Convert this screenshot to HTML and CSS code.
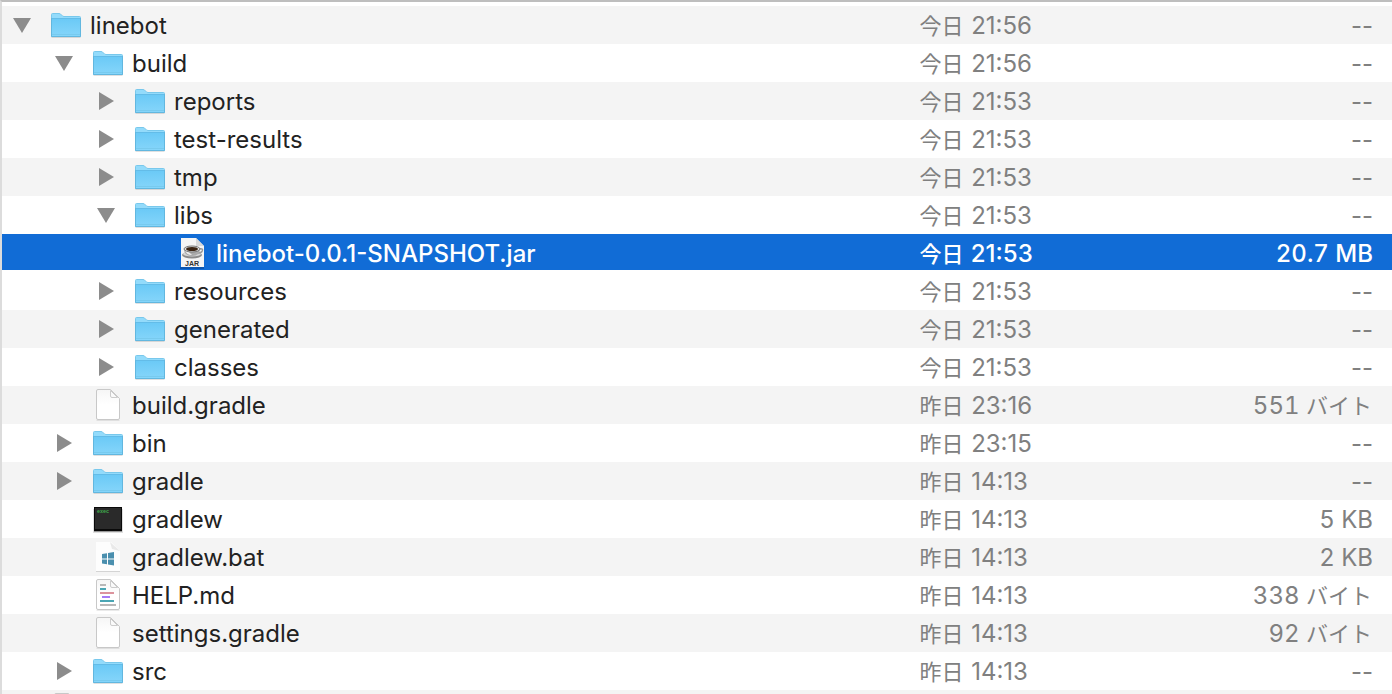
FILE: index.html
```html
<!DOCTYPE html>
<html lang="ja">
<head>
    <meta charset="UTF-8">
    <meta name="viewport" content="width=device-width, initial-scale=1.0">
    <title>linebot</title>
    <link rel="stylesheet" href="styles.css">
</head>
<body>
    <!-- Icon definitions -->
    <svg class="sprite" width="0" height="0" aria-hidden="true">
        <defs>
            <linearGradient id="folder-fill" x1="0" y1="0" x2="0" y2="1">
                <stop offset="0" stop-color="#6ac9f6"/>
                <stop offset="1" stop-color="#85d5fa"/>
            </linearGradient>
            <linearGradient id="page-fill" x1="0" y1="0" x2="0" y2="1">
                <stop offset="0" stop-color="#f6f6f6"/>
                <stop offset="0.5" stop-color="#ffffff"/>
            </linearGradient>
            <symbol id="down" viewBox="0 0 18 18">
                <path d="M0 2H18L9 17Z" fill="#8c8c8c"/>
            </symbol>
            <symbol id="right" viewBox="0 0 18 18">
                <path d="M2 0V18L17 9Z" fill="#8c8c8c"/>
            </symbol>
            <symbol id="folder" viewBox="0 0 32 32">
                <path d="M1.500 28.500H30.500" stroke="#000" stroke-opacity="0.12"/>
                <path d="M1.500 5.500Q1.500 4.500 2.500 4.500H9Q10.500 4.500 11.500 6Q12.500 7.500 14 7.500H29.500Q30.500 7.500 30.500 8.500V27.500H1.500Z" fill="#93dbfb" stroke="#78c8ec"/>
                <path d="M2 9H30V27H2Z" fill="url(#folder-fill)"/>
                <path d="M2 9.500H30" stroke="#63bce8"/>
                <path d="M1.500 9V27.500H30.500V9" fill="none" stroke="#62b7df"/>
                <path d="M2 25.500H30" stroke="#78caee"/>
            </symbol>
            <symbol id="page" viewBox="0 0 32 32">
                <path d="M4.500 31.200H27.500" stroke="#000" stroke-opacity="0.12"/>
                <path d="M6 0.500H18.500L27.500 9.500V29Q27.500 30.500 26 30.500H6Q4.500 30.500 4.500 29V2Q4.500 0.500 6 0.500Z" fill="url(#page-fill)" stroke="#c8c8c8"/>
                <path d="M18.500 1.500V7Q18.500 8.500 20 8.500H25.500Z" fill="#fafafa" stroke="#cccccc"/>
            </symbol>
            <symbol id="exec" viewBox="0 0 32 32">
                <rect x="1" y="6" width="30" height="24" fill="#000" opacity="0.12"/>
                <rect x="2" y="4" width="28" height="24" fill="#0a0a0a"/>
                <rect x="3" y="5" width="26" height="21" fill="#2a2a2a"/>
                <path d="M2 28.500H30" stroke="#999"/>
                <text x="5" y="10" class="exec-text">exec</text>
            </symbol>
            <symbol id="bat" viewBox="0 0 32 32">
                <path d="M4 1H19L28 10V30H4Z" fill="#fdfdfd"/>
                <path d="M4 30.500H28" stroke="#d4d4d4"/>
                <path d="M18 1L20 8L28 10Z" fill="#e9e9e9"/>
                <path d="M10 13L15 12.200V17.500H10ZM16 12L22 11V17.500H16ZM10 18.500H15V23.300L10 22.500ZM16 18.500H22V24.500L16 23.500Z" fill="#4a8fae"/>
            </symbol>
            <symbol id="markdown" viewBox="0 0 32 32">
                <use href="#page"/>
                <path d="M8 6H14M8 26H24" stroke="#b8b8b8" stroke-width="2"/>
                <path d="M8 10H14M8 22H22" stroke="#4ba6b4" stroke-width="2"/>
                <path d="M8 14H22" stroke="#dc939d" stroke-width="2"/>
                <path d="M10 18H18" stroke="#a77cf5" stroke-width="2"/>
            </symbol>
            <symbol id="jar" viewBox="0 0 32 32">
                <path d="M4 31H28" stroke="#073f8a"/>
                <path d="M5 1H20L28 9V30H5Z" fill="#f5f5f5"/>
                <path d="M20 1V9H28Z" fill="#d8d8d8"/>
                <ellipse cx="16" cy="18" rx="10" ry="3.500" fill="#8a8a8a"/>
                <ellipse cx="16" cy="17" rx="9" ry="2.500" fill="#d6d6d6"/>
                <path d="M23 12Q28 11 26 14.500Q25 16 21 16" fill="none" stroke="#999" stroke-width="1.500"/>
                <path d="M8 12Q8 19 16 19Q24 19 24 12Z" fill="#aaa"/>
                <path d="M9 13Q10 18 16 18Q14 15 9 13Z" fill="#eee"/>
                <ellipse cx="16" cy="12" rx="8" ry="3" fill="#ddd" stroke="#777"/>
                <ellipse cx="16" cy="12" rx="6" ry="2" fill="#3b2412"/>
                <text x="16" y="29" class="jar-text">JAR</text>
            </symbol>
        </defs>
    </svg>

    <main class="file-list">
        <table>
            <tbody>
                <tr>
                    <td class="name"><div class="item"><button class="toggle" aria-label="linebot"><svg><use href="#down"/></svg></button><svg class="icon"><use href="#folder"/></svg><span class="label">linebot</span></div></td>
                    <td class="date"><span class="kana">今日</span> 21:56</td>
                    <td class="size">--</td>
                </tr>
                <tr>
                    <td class="name"><div class="item level-1"><button class="toggle" aria-label="build"><svg><use href="#down"/></svg></button><svg class="icon"><use href="#folder"/></svg><span class="label">build</span></div></td>
                    <td class="date"><span class="kana">今日</span> 21:56</td>
                    <td class="size">--</td>
                </tr>
                <tr>
                    <td class="name"><div class="item level-2"><button class="toggle" aria-label="reports"><svg><use href="#right"/></svg></button><svg class="icon"><use href="#folder"/></svg><span class="label">reports</span></div></td>
                    <td class="date"><span class="kana">今日</span> 21:53</td>
                    <td class="size">--</td>
                </tr>
                <tr>
                    <td class="name"><div class="item level-2"><button class="toggle" aria-label="test-results"><svg><use href="#right"/></svg></button><svg class="icon"><use href="#folder"/></svg><span class="label">test-results</span></div></td>
                    <td class="date"><span class="kana">今日</span> 21:53</td>
                    <td class="size">--</td>
                </tr>
                <tr>
                    <td class="name"><div class="item level-2"><button class="toggle" aria-label="tmp"><svg><use href="#right"/></svg></button><svg class="icon"><use href="#folder"/></svg><span class="label">tmp</span></div></td>
                    <td class="date"><span class="kana">今日</span> 21:53</td>
                    <td class="size">--</td>
                </tr>
                <tr>
                    <td class="name"><div class="item level-2"><button class="toggle" aria-label="libs"><svg><use href="#down"/></svg></button><svg class="icon"><use href="#folder"/></svg><span class="label">libs</span></div></td>
                    <td class="date"><span class="kana">今日</span> 21:53</td>
                    <td class="size">--</td>
                </tr>
                <tr class="selected">
                    <td class="name"><div class="item level-3"><span class="toggle"></span><svg class="icon"><use href="#jar"/></svg><span class="label">linebot-0.0.1-SNAPSHOT.jar</span></div></td>
                    <td class="date"><span class="kana">今日</span> 21:53</td>
                    <td class="size bytes">20.7 MB</td>
                </tr>
                <tr>
                    <td class="name"><div class="item level-2"><button class="toggle" aria-label="resources"><svg><use href="#right"/></svg></button><svg class="icon"><use href="#folder"/></svg><span class="label">resources</span></div></td>
                    <td class="date"><span class="kana">今日</span> 21:53</td>
                    <td class="size">--</td>
                </tr>
                <tr>
                    <td class="name"><div class="item level-2"><button class="toggle" aria-label="generated"><svg><use href="#right"/></svg></button><svg class="icon"><use href="#folder"/></svg><span class="label">generated</span></div></td>
                    <td class="date"><span class="kana">今日</span> 21:53</td>
                    <td class="size">--</td>
                </tr>
                <tr>
                    <td class="name"><div class="item level-2"><button class="toggle" aria-label="classes"><svg><use href="#right"/></svg></button><svg class="icon"><use href="#folder"/></svg><span class="label">classes</span></div></td>
                    <td class="date"><span class="kana">今日</span> 21:53</td>
                    <td class="size">--</td>
                </tr>
                <tr>
                    <td class="name"><div class="item level-1"><span class="toggle"></span><svg class="icon"><use href="#page"/></svg><span class="label">build.gradle</span></div></td>
                    <td class="date"><span class="kana">昨日</span> 23:16</td>
                    <td class="size bytes">551 <span class="kana">バイト</span></td>
                </tr>
                <tr>
                    <td class="name"><div class="item level-1"><button class="toggle" aria-label="bin"><svg><use href="#right"/></svg></button><svg class="icon"><use href="#folder"/></svg><span class="label">bin</span></div></td>
                    <td class="date"><span class="kana">昨日</span> 23:15</td>
                    <td class="size">--</td>
                </tr>
                <tr>
                    <td class="name"><div class="item level-1"><button class="toggle" aria-label="gradle"><svg><use href="#right"/></svg></button><svg class="icon"><use href="#folder"/></svg><span class="label">gradle</span></div></td>
                    <td class="date"><span class="kana">昨日</span> 14:13</td>
                    <td class="size">--</td>
                </tr>
                <tr>
                    <td class="name"><div class="item level-1"><span class="toggle"></span><svg class="icon"><use href="#exec"/></svg><span class="label">gradlew</span></div></td>
                    <td class="date"><span class="kana">昨日</span> 14:13</td>
                    <td class="size bytes">5 KB</td>
                </tr>
                <tr>
                    <td class="name"><div class="item level-1"><span class="toggle"></span><svg class="icon"><use href="#bat"/></svg><span class="label">gradlew.bat</span></div></td>
                    <td class="date"><span class="kana">昨日</span> 14:13</td>
                    <td class="size bytes">2 KB</td>
                </tr>
                <tr>
                    <td class="name"><div class="item level-1"><span class="toggle"></span><svg class="icon"><use href="#markdown"/></svg><span class="label">HELP.md</span></div></td>
                    <td class="date"><span class="kana">昨日</span> 14:13</td>
                    <td class="size bytes">338 <span class="kana">バイト</span></td>
                </tr>
                <tr>
                    <td class="name"><div class="item level-1"><span class="toggle"></span><svg class="icon"><use href="#page"/></svg><span class="label">settings.gradle</span></div></td>
                    <td class="date"><span class="kana">昨日</span> 14:13</td>
                    <td class="size bytes">92 <span class="kana">バイト</span></td>
                </tr>
                <tr>
                    <td class="name"><div class="item level-1"><button class="toggle" aria-label="src"><svg><use href="#right"/></svg></button><svg class="icon"><use href="#folder"/></svg><span class="label">src</span></div></td>
                    <td class="date"><span class="kana">昨日</span> 14:13</td>
                    <td class="size">--</td>
                </tr>
                <tr>
                    <td class="name"><div class="item"><span class="toggle"></span><svg class="icon"><use href="#page"/></svg></div></td>
                    <td class="date"></td>
                    <td class="size"></td>
                </tr>
            </tbody>
        </table>
    </main>
</body>
</html>
```

FILE: styles.css
```css
* { box-sizing: border-box; }
body {
    margin: 0;
    font-family: Inter, "Noto Sans CJK JP", sans-serif;
    font-size: 24px;
    line-height: 36px;
    color: #222;
    background: #fff;
}
.sprite {
    position: absolute;
}
.file-list {
    height: 100vh;
    overflow: hidden;
    padding-top: 4px;
    border-top: 2px solid #bebebe;
    border-left: 2px solid #dcdcdc;
}
table {
    width: 100%;
    table-layout: fixed;
    border-spacing: 0;
}
tr { height: 38px; }
tr:nth-child(odd) { background: #f4f4f4; }
td {
    height: 38px;
    padding: 2px 0 0;
    white-space: nowrap;
}
.name {
    width: 66%;
    padding: 0;
}
.item {
    display: flex;
    align-items: center;
    padding-left: 11px;
}
.level-1 { padding-left: 53px; }
.level-2 { padding-left: 95px; }
.level-3 { padding-left: 137px; }
.toggle {
    flex: none;
    width: 18px;
    height: 18px;
    margin-right: 19px;
    padding: 0;
    border: none;
    background: none;
}
.toggle svg {
    display: block;
    width: 18px;
    height: 18px;
}
.icon {
    flex: none;
    width: 32px;
    height: 32px;
    margin-right: 8px;
}
.label { padding-top: 2px; }
.kana {
    margin-right: 1px;
    font-size: 22px;
    line-height: 0;
}
.date { color: #808080; }
.size {
    color: #808080;
    text-align: right;
    padding-right: 19px;
}
.bytes { font-variant-numeric: tabular-nums; }
tr.selected {
    background: #116cd6;
    box-shadow: inset 0 -2px #fff;
}
.selected td {
    color: #fff;
    font-weight: 500;
}
.exec-text {
    font: bold 5px "Liberation Mono", monospace;
    fill: #3fae4c;
}
.jar-text {
    font: bold 7px "Liberation Sans", sans-serif;
    fill: #333;
    text-anchor: middle;
}
```
